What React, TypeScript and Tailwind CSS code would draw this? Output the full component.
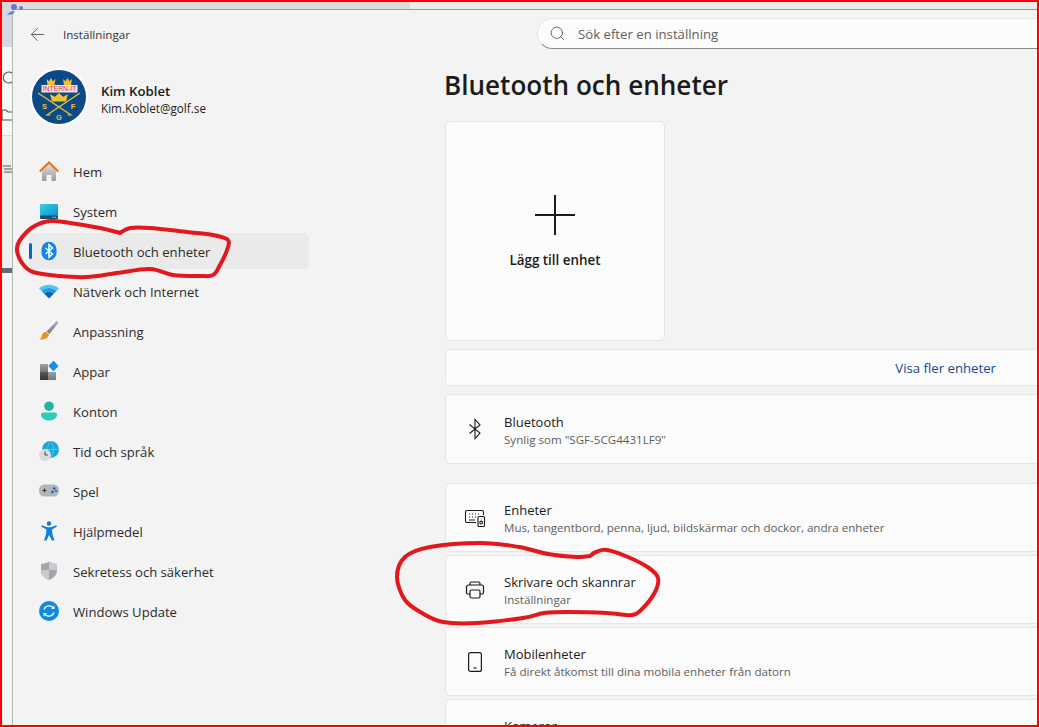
import React from "react";
import { ArrowLeft, Search } from "lucide-react";

const font = { fontFamily: '"Open Sans", "Noto Sans", sans-serif' };

function smooth(points: number[][]) {
  let d = `M${points[0][0]} ${points[0][1]}`;
  for (let i = 0; i < points.length - 1; i++) {
    const p0 = points[Math.max(i - 1, 0)];
    const p1 = points[i];
    const p2 = points[i + 1];
    const p3 = points[Math.min(i + 2, points.length - 1)];
    d += `C${p1[0] + (p2[0] - p0[0]) / 6} ${p1[1] + (p2[1] - p0[1]) / 6} ${p2[0] - (p3[0] - p1[0]) / 6} ${p2[1] - (p3[1] - p1[1]) / 6} ${p2[0]} ${p2[1]}`;
  }
  return d;
}

const ring1 = [[120,233],[100,228],[70,223],[50,221],[33,227],[20,240],[17,250],[22,263],[33,272],[60,276],[87,277],[117,273],[150,269],[173,275],[200,276],[213,275],[220,265],[227,250],[228,240],[213,235],[187,232],[150,228],[130,228],[120,233]];
const ring2 = [[590,556],[596,552],[607,550],[628,557],[649,568],[658,578],[655,592],[643,608],[632,615],[607,613],[569,612],[544,613],[523,618],[477,623],[443,622],[422,613],[405,600],[397,577],[405,557],[430,547],[481,543],[519,547],[548,554],[577,557],[590,556]];

function Logo() {
  const crown = "M0 7L-1 1 1.500 3.200 3.500 0 5.500 3.200 8 1 7 7z";
  return (
    <svg width="58" height="58" viewBox="0 0 58 58" className="shrink-0">
      <circle cx="29" cy="29" r="29" fill="#fff" />
      <circle cx="29" cy="29" r="27" fill="#0b4a86" />
      <g fill="#f0c22e">
        <path d={crown} transform="translate(17.500 10)" />
        <path d={crown} transform="translate(34 10)" />
        <path d={crown} transform="translate(22 25) scale(2 1.200) translate(0 0)" />
      </g>
      <rect x="11.500" y="17" width="36" height="7.500" fill="#f7dfe0" />
      <text x="29.500" y="23.300" textAnchor="middle" fontSize="6.800" fill="#d63540" fontFamily="Liberation Sans">INTERN-IT</text>
      <g stroke="#f0c22e" strokeWidth="1.200" fill="none">
        <path d="M8 25L41 47h-3.500M50 25L17 47h3.500" />
      </g>
      <g fill="#f0c22e" fontSize="7.500" fontWeight="bold" fontFamily="Liberation Sans" textAnchor="middle">
        <text x="14.500" y="40.500">S</text>
        <text x="43" y="40.500">F</text>
        <text x="29" y="52">G</text>
      </g>
    </svg>
  );
}

const icons: Record<string, React.ReactNode> = {
  Hem: (
    <svg width="20" height="20" viewBox="0 0 20 20">
      <defs><linearGradient id="h" x1="0" y1="0" x2="0" y2="1"><stop offset="0" stopColor="#dcdcdc" /><stop offset="1" stopColor="#9c9c9c" /></linearGradient></defs>
      <path d="M3 9.500L10 3l7 6.500V19a1 1 0 0 1-1 1h-3.500v-6h-5v6H4a1 1 0 0 1-1-1z" fill="url(#h)" />
      <path d="M0.800 10.500L10 1.500 19.200 10.500" fill="none" stroke="#e8720c" strokeWidth="2" />
    </svg>
  ),
  System: (
    <svg width="20" height="20" viewBox="0 0 20 20">
      <defs><linearGradient id="s" x1="0" y1="0" x2="1" y2="1"><stop offset="0" stopColor="#38d0e8" /><stop offset="1" stopColor="#0d8ecf" /></linearGradient></defs>
      <rect x="1" y="3" width="18" height="12" rx="1" fill="url(#s)" />
      <rect x="1" y="14.500" width="18" height="3.500" rx="1" fill="#1d4f70" />
      <rect x="13.500" y="15.800" width="1.200" height="1.200" fill="#9cd" /><rect x="15.800" y="15.800" width="1.200" height="1.200" fill="#9cd" />
    </svg>
  ),
  Bluetooth: (
    <svg width="20" height="20" viewBox="0 0 20 20">
      <rect x="2.500" y="0.800" width="15" height="18.400" rx="7.500" fill="#0f86ee" />
      <path d="M6.500 7L13.500 13 10 16.300V3.700L13.500 7 6.500 13" fill="none" stroke="#fff" strokeWidth="1.500" />
    </svg>
  ),
  Natverk: (
    <svg width="20" height="20" viewBox="0 0 20 20">
      <path d="M0 7.500C5.500 2.500 14.500 2.500 20 7.500L17.500 10C13 6 7 6 2.500 10z" fill="#4fc8ee" />
      <path d="M2.500 10C7 6 13 6 17.500 10L15 12.500C12 10 8 10 5 12.500z" fill="#1f9be0" />
      <path d="M5 12.500C8 10 12 10 15 12.500L10 17.500z" fill="#0c62b0" />
    </svg>
  ),
  Anpassning: (
    <svg width="20" height="20" viewBox="0 0 20 20">
      <defs><linearGradient id="b" x1="0" y1="1" x2="1" y2="0"><stop offset="0" stopColor="#777b82" /><stop offset="1" stopColor="#a9adb3" /></linearGradient></defs>
      <path d="M18.500 0.500c.8.500.7 1.500.2 2.300L10.500 13 7.500 10.500 17 .8c.5-.4 1-.6 1.500-.3z" fill="url(#b)" />
      <path d="M7 11l3 2.500c-.5 3-3.500 5-9.500 5 2.500-1.500 1.500-3 3-5.500.8-1.200 2-2 3.500-2z" fill="#ee8a24" />
    </svg>
  ),
  Appar: (
    <svg width="20" height="20" viewBox="0 0 20 20">
      <defs>
        <linearGradient id="a1" x1="0" y1="0" x2="0" y2="1"><stop offset="0" stopColor="#9b9ea2" /><stop offset="1" stopColor="#75787c" /></linearGradient>
        <linearGradient id="a2" x1="0" y1="0" x2="0" y2="1"><stop offset="0" stopColor="#55585c" /><stop offset="1" stopColor="#34373a" /></linearGradient>
      </defs>
      <rect x="1" y="3" width="8" height="8" fill="url(#a1)" />
      <rect x="1" y="11" width="8" height="8" fill="url(#a2)" />
      <rect x="9" y="11" width="8" height="8" fill="url(#a1)" />
      <rect x="10.800" y="1.300" width="7.400" height="7.400" rx=".5" transform="rotate(45 14.500 5)" fill="#1a8fe8" />
    </svg>
  ),
  Konton: (
    <svg width="20" height="20" viewBox="0 0 20 20">
      <circle cx="10" cy="5.200" r="4.800" fill="#1db5a6" />
      <path d="M2 13.500a2 2 0 0 1 2-2h12a2 2 0 0 1 2 2c0 3.500-3.500 6-8 6s-8-2.500-8-6z" fill="#2ccdb8" />
    </svg>
  ),
  Tid: (
    <svg width="20" height="20" viewBox="0 0 20 20">
      <circle cx="11.500" cy="8.500" r="8.500" fill="#1ba5d8" />
      <path d="M3 8.500h17M11.500 0c-4 5-4 12 0 17M11.500 0c4 5 4 12 0 17" stroke="#5fd6e8" strokeWidth=".7" fill="none" />
      <circle cx="6" cy="14" r="6" fill="#dcdcdc" />
      <path d="M6 10.500V14h2.800" stroke="#444" strokeWidth="1" fill="none" />
    </svg>
  ),
  Spel: (
    <svg width="20" height="20" viewBox="0 0 20 20">
      <rect x="0" y="3.500" width="20" height="12" rx="5.500" fill="#b2b5ba" />
      <path d="M3.500 9.500h4M5.500 7.500v4" stroke="#333" strokeWidth="1" />
      <circle cx="15.200" cy="7.500" r="1.300" fill="#0c62c0" /><circle cx="13.500" cy="11" r="1.300" fill="#0c62c0" /><circle cx="17" cy="10" r="1" fill="#0c62c0" />
    </svg>
  ),
  Hjalp: (
    <svg width="20" height="20" viewBox="0 0 20 20">
      <circle cx="10" cy="2.500" r="2.200" fill="#0f7ee0" />
      <path d="M2 5.500l1-1.200 5 2h4l5-2 1 1.200-5 3 .5 5 2 6h-2.500L10 14l-2.500 5.500H5l2-6 .5-5z" fill="#0f7ee0" />
    </svg>
  ),
  Sekretess: (
    <svg width="20" height="20" viewBox="0 0 20 20">
      <path d="M10 .5c2 1.500 5 2.500 8 2.500v6c0 5-3.500 8.500-8 10-4.500-1.500-8-5-8-10V3c3 0 6-1 8-2.500z" fill="#a2a6ab" />
      <path d="M10 .5v18.500c-4.500-1.500-8-5-8-10h8zM10 9h8c0 0 0-3 0-6-3 0-6-1-8-2.500z" fill="#c7cace" />
    </svg>
  ),
  Update: (
    <svg width="20" height="20" viewBox="0 0 20 20">
      <circle cx="10" cy="10" r="10" fill="#0f8ae4" />
      <path d="M5 8.500A5.300 5.300 0 0 1 14.300 7M15 11.500A5.300 5.300 0 0 1 5.700 13" fill="none" stroke="#fff" strokeWidth="1.300" />
      <path d="M15.500 4.500v3.500h-3.500zM4.500 15.500V12H8z" fill="#fff" />
    </svg>
  ),
};

const nav = [
  ["Hem", "Hem"],
  ["System", "System"],
  ["Bluetooth", "Bluetooth och enheter"],
  ["Natverk", "Nätverk och Internet"],
  ["Anpassning", "Anpassning"],
  ["Appar", "Appar"],
  ["Konton", "Konton"],
  ["Tid", "Tid och språk"],
  ["Spel", "Spel"],
  ["Hjalp", "Hjälpmedel"],
  ["Sekretess", "Sekretess och säkerhet"],
  ["Update", "Windows Update"],
];

const ink = { fill: "none", stroke: "#1b1b1b", strokeWidth: 1.1 };

const BluetoothGlyph = (
  <svg width="20" height="22" viewBox="0 0 20 22" {...ink}>
    <path d="M4.500 6.500L15 15l-5 5.500V1.500L15 7 4.500 15.500" />
  </svg>
);
const DevicesGlyph = (
  <svg width="22" height="22" viewBox="0 0 22 22" {...ink}>
    <path d="M12 15.500H3a1.500 1.500 0 0 1-1.500-1.500V5A1.500 1.500 0 0 1 3 3.500h15A1.500 1.500 0 0 1 19.500 5v3" />
    <path d="M5 7h1M8 7h1M11 7h1M14 7h1M5 10h1M8 10h1M11 10h1M5 13h6" />
    <rect x="14" y="9.500" width="6.500" height="10" rx="1" />
    <circle cx="17.200" cy="15.500" r="1.400" /><path d="M17 12h.5" />
  </svg>
);
const PrinterGlyph = (
  <svg width="20" height="20" viewBox="0 0 20 20" {...ink} strokeWidth={1.2}>
    <path d="M5 5V3.500A1.500 1.500 0 0 1 6.500 2h7A1.500 1.500 0 0 1 15 3.500V5" />
    <path d="M5 14H3a1.500 1.500 0 0 1-1.500-1.500V7A2 2 0 0 1 3.500 5h13A2 2 0 0 1 18.500 7v5.500A1.500 1.500 0 0 1 17 14h-2" />
    <rect x="5" y="10" width="10" height="8" rx="1.500" />
  </svg>
);
const PhoneGlyph = (
  <svg width="14" height="20" viewBox="0 0 14 20" {...ink} strokeWidth={1.2}>
    <rect x=".6" y=".6" width="12.800" height="18.800" rx="2" />
    <path d="M5.500 16h3" />
  </svg>
);
const CameraGlyph = (
  <svg width="20" height="20" viewBox="0 0 20 20" {...ink}>
    <rect x="1.500" y="3.500" width="17" height="13" rx="2" />
    <circle cx="10" cy="10" r="3" />
  </svg>
);

function Row({ icon, title, sub, className }: { icon: React.ReactNode; title: string; sub: string; className: string }) {
  return (
    <div className={`flex items-center rounded-l-[5px] border border-r-0 border-[#e6e6e6] bg-[#fbfbfb] ${className}`}>
      <div className="flex w-[58px] shrink-0 justify-center pr-[1px]">{icon}</div>
      <div className="pt-[2px]">
        <div className="text-[13px] leading-[18px] text-[#1b1b1b]">{title}</div>
        <div className="h-[17px] pt-[1px] text-[11.600px] leading-[16px] text-[#5e5e5e]">{sub}</div>
      </div>
    </div>
  );
}

export default function App() {
  return (
    <div className="relative flex h-[727px] w-[1039px] overflow-hidden border-2 border-[#ff0000] bg-[#f3f3f3]" style={font}>
      <div className="flex w-[10px] shrink-0 flex-col">
        <div className="h-[45px] bg-[#d4d8e0]" />
        <div className="h-[88px] bg-[#f7f7f7]" />
        <div className="h-[133px] border-t border-[#d8d8d8] bg-[#efefef]" />
        <div className="h-[5px] bg-[#5b6b7a]" />
        <div className="flex-1 bg-[#f5f5f5]" />
      </div>
      <div className="flex min-w-0 flex-1 flex-col">
        <div className="flex h-[7px] shrink-0">
          <div className="w-[398px] bg-[#dcdcdc]" />
          <div className="flex-1 bg-[#ececec]" />
        </div>
        <div className="flex min-h-0 flex-1 border-l border-t border-l-[#b5b5b5] border-t-[#9a9a9a] bg-[#f3f3f3]">
          <aside className="w-[432px] shrink-0">
            <div className="flex h-[49px] items-center pl-[14px]">
              <ArrowLeft size={21} strokeWidth={1} className="text-[#555]" />
              <span className="ml-[15px] text-[11.600px] text-[#333]">Inställningar</span>
            </div>
            <div className="mt-[9px] flex h-[58px] items-center pl-[17px]">
              <Logo />
              <div className="ml-[13px] pt-[4px]">
                <div className="text-[13.200px] font-semibold leading-[18px] text-[#1b1b1b]">Kim Koblet</div>
                <div className="text-[11.700px] leading-[17px] text-[#1b1b1b]">Kim.Koblet@golf.se</div>
              </div>
            </div>
            <nav className="mt-[27px] flex w-[296px] flex-col">
              {nav.map(([k, label]) => (
                <div key={k} className={`relative mb-[4px] ml-[16px] flex h-[36px] w-[280px] items-center rounded-[5px] ${k === "Bluetooth" ? "bg-[#eaeaea]" : ""}`}>
                  {k === "Bluetooth" && <span className="absolute left-0 top-[10px] h-[16px] w-[3px] rounded-full bg-[#0f62be]" />}
                  <span className="ml-[10px] flex w-[20px] justify-center">{icons[k]}</span>
                  <span className="ml-[14px] mt-[4px] text-[13.100px] text-[#2b2b2b]">{label}</span>
                </div>
              ))}
            </nav>
          </aside>
          <main className="min-w-0 flex-1">
            <div className="ml-[92px] mt-[8px] flex h-[31px] items-center rounded-l-[16px] border border-r-0 border-[#e6e6e6] border-b-[#8a8a8a] bg-[#fcfcfc] pl-[11px]">
              <Search size={17} strokeWidth={1} className="text-[#333]" />
              <span className="ml-[12px] pt-[3px] text-[13.200px] text-[#5f5f5f]">Sök efter en inställning</span>
            </div>
            <h1 className="ml-[-1px] mt-[17px] text-[26.100px] font-semibold leading-[38px] text-[#1b1b1b]">Bluetooth och enheter</h1>
            <div className="mt-[17px] flex h-[220px] w-[220px] flex-col items-center rounded-[5px] border border-[#e6e6e6] bg-[#fbfbfb] pt-[73px]">
              <svg width="40" height="40" viewBox="0 0 40 40" fill="none" stroke="#1b1b1b" strokeWidth="2">
                <path d="M20 0v40M0 20h40" />
              </svg>
              <span className="mt-[15px] text-[13.400px] font-semibold text-[#1b1b1b]">Lägg till enhet</span>
            </div>
            <div className="mt-[8px] flex h-[37px] items-center justify-end rounded-l-[5px] border border-r-0 border-[#e6e6e6] bg-[#fbfbfb] pr-[41px] pt-[2px]">
              <span className="text-[13.200px] font-medium text-[#0f4a96]">Visa fler enheter</span>
            </div>
            <Row className="mt-[8px] h-[70px]" icon={BluetoothGlyph} title="Bluetooth" sub={'Synlig som "SGF-5CG4431LF9"'} />
            <Row className="mt-[19px] h-[69px]" icon={DevicesGlyph} title="Enheter" sub="Mus, tangentbord, penna, ljud, bildskärmar och dockor, andra enheter" />
            <Row className="mt-[3px] h-[69px]" icon={PrinterGlyph} title="Skrivare och skannrar" sub="Inställningar" />
            <Row className="mt-[3px] h-[69px]" icon={PhoneGlyph} title="Mobilenheter" sub="Få direkt åtkomst till dina mobila enheter från datorn" />
            <Row className="mt-[3px] h-[69px]" icon={CameraGlyph} title="Kameror" sub="" />
          </main>
        </div>
      </div>
      <svg className="pointer-events-none absolute left-[-2px] top-[-2px]" width="1039" height="727" fill="none">
        <g fill="#6b74d8">
          <circle cx="14" cy="7" r="3" /><circle cx="21" cy="8" r="2" />
          <path d="M7 15c2-3 5-4 8-4l-2 3z" />
        </g>
        <g stroke="#555" strokeWidth="1.200">
          <path d="M12 73a5.500 5.500 0 1 0 0 9M2 110h4l2 2h4M2 110v10h10" />
          <path d="M3 166h8M4 169h8M4 172h8" />
        </g>
        <path d={smooth(ring1)} stroke="#e3171e" strokeWidth="4" strokeLinecap="round" />
        <path d={smooth(ring2)} stroke="#e3171e" strokeWidth="4" strokeLinecap="round" />
      </svg>
    </div>
  );
}
